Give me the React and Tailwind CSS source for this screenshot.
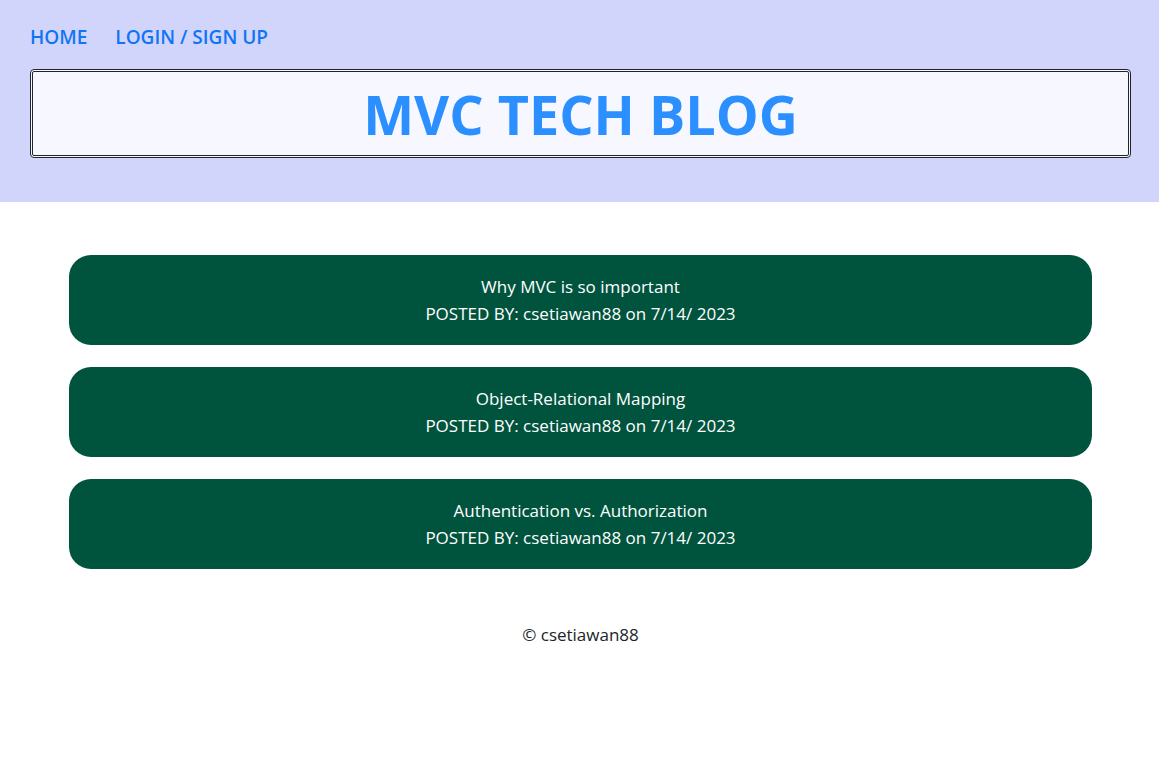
const posts = [
  { id: 1, title: "Why MVC is so important", author: "csetiawan88", date: "7/14/ 2023" },
  { id: 2, title: "Object-Relational Mapping", author: "csetiawan88", date: "7/14/ 2023" },
  { id: 3, title: "Authentication vs. Authorization", author: "csetiawan88", date: "7/14/ 2023" },
];

function Header() {
  return (
    <header className="bg-[#d1d5fb] pt-[22px] pr-7 pb-11 pl-[30px]">
      <nav className="flex gap-7 text-[19px] leading-[30px] font-semibold text-[#0f75f5]">
        <a href="#home">HOME</a>
        <a href="#login">LOGIN / SIGN UP</a>
      </nav>
      <h1 className="mt-[17px] rounded border-3 border-double border-[#212529] bg-[#f7f8ff] pt-1.5 pb-[5px] text-center text-[54px] leading-[72px] font-bold text-[#2b8fff]">
        MVC TECH BLOG
      </h1>
    </header>
  );
}

function Post({ post }) {
  return (
    <a
      href={`#post-${post.id}`}
      className="block rounded-[22px] bg-[#00543d] px-4 py-[18px] text-center text-[17px] leading-[27px] text-white"
    >
      <h2>{post.title}</h2>
      <p>
        POSTED BY: {post.author} on {post.date}
      </p>
    </a>
  );
}

export default function App() {
  return (
    <div className="min-h-screen bg-white font-['Segoe_UI','Open_Sans',sans-serif] text-[#212529]">
      <Header />
      <main className="flex flex-col gap-[22px] pt-[53px] pr-[67px] pl-[69px]">
        {posts.map((post) => (
          <Post key={post.id} post={post} />
        ))}
      </main>
      <footer className="mt-[52px] pl-[2px] text-center text-[17px] leading-[27px]">© csetiawan88</footer>
    </div>
  );
}
